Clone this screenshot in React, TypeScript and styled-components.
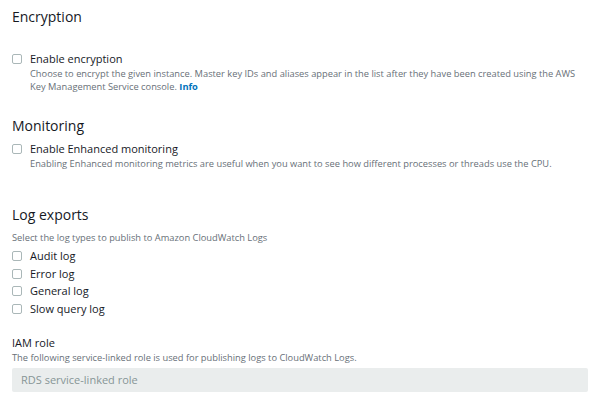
import React from "react";
import styled, { createGlobalStyle } from "styled-components";

const Global = createGlobalStyle`
  html, body { margin: 0; padding: 0; background: #ffffff; }
  body { font-family: "Open Sans", "Noto Sans", sans-serif; color: #16191f; }
`;

const Page = styled.div`
  padding: 7px 12px 0 12px;
  width: 600px;
  box-sizing: border-box;
`;

const Heading = styled.h2<{ $top?: number }>`
  margin: ${(p) => p.$top ?? 0}px 0 0 0;
  font-size: 14px;
  font-weight: 400;
  line-height: 20px;
  color: #16191f;
`;

const Row = styled.label<{ $top?: number }>`
  display: flex;
  align-items: center;
  gap: 8px;
  margin-top: ${(p) => p.$top ?? 0}px;
  height: 16px;
  font-size: 11px;
  line-height: 16px;
  color: #16191f;
`;

const Box = styled.span`
  width: 10px;
  height: 10px;
  border: 1px solid #aab7b8;
  border-radius: 2px;
  box-sizing: border-box;
  flex: none;
  background: #fff;
`;

const Desc = styled.p<{ $indent?: boolean; $top?: number }>`
  margin: ${(p) => p.$top ?? 0}px 0 0 ${(p) => (p.$indent ? 18 : 0)}px;
  font-size: 9.3px;
  line-height: 13px;
  color: #687078;
  max-width: 552px;
`;

const Info = styled.a`
  color: #0073bb;
  font-weight: 700;
  text-decoration: none;
`;

const List = styled.div`
  display: flex;
  flex-direction: column;
  gap: 1.7px;
  margin-top: 4px;
`;

const Label = styled.div`
  margin-top: 18px;
  font-size: 11px;
  line-height: 16px;
  color: #16191f;
`;

const Field = styled.div`
  margin-top: 3.5px;
  height: 24px;
  border-radius: 2px;
  background: #eaeded;
  display: flex;
  align-items: center;
  padding-left: 9px;
  font-size: 11px;
  color: #879596;
`;

const Check = ({ children, top }: { children: React.ReactNode; top?: number }) => (
  <Row $top={top}>
    <Box />
    <span>{children}</span>
  </Row>
);

export default function App() {
  return (
    <>
      <Global />
      <Page>
        <Heading>Encryption</Heading>
        <Check top={24}>Enable encryption</Check>
        <Desc $indent>
          Choose to encrypt the given instance. Master key IDs and aliases appear in the list after they have been created using the AWS Key Management Service console. <Info href="#">Info</Info>
        </Desc>
        <Heading $top={23}>Monitoring</Heading>
        <Check top={5}>Enable Enhanced monitoring</Check>
        <Desc $indent>
          Enabling Enhanced monitoring metrics are useful when you want to see how different processes or threads use the CPU.
        </Desc>
        <Heading $top={35}>Log exports</Heading>
        <Desc $top={6}>Select the log types to publish to Amazon CloudWatch Logs</Desc>
        <List>
          <Check>Audit log</Check>
          <Check>Error log</Check>
          <Check>General log</Check>
          <Check>Slow query log</Check>
        </List>
        <Label>IAM role</Label>
        <Desc>The following service-linked role is used for publishing logs to CloudWatch Logs.</Desc>
        <Field>RDS service-linked role</Field>
      </Page>
    </>
  );
}
